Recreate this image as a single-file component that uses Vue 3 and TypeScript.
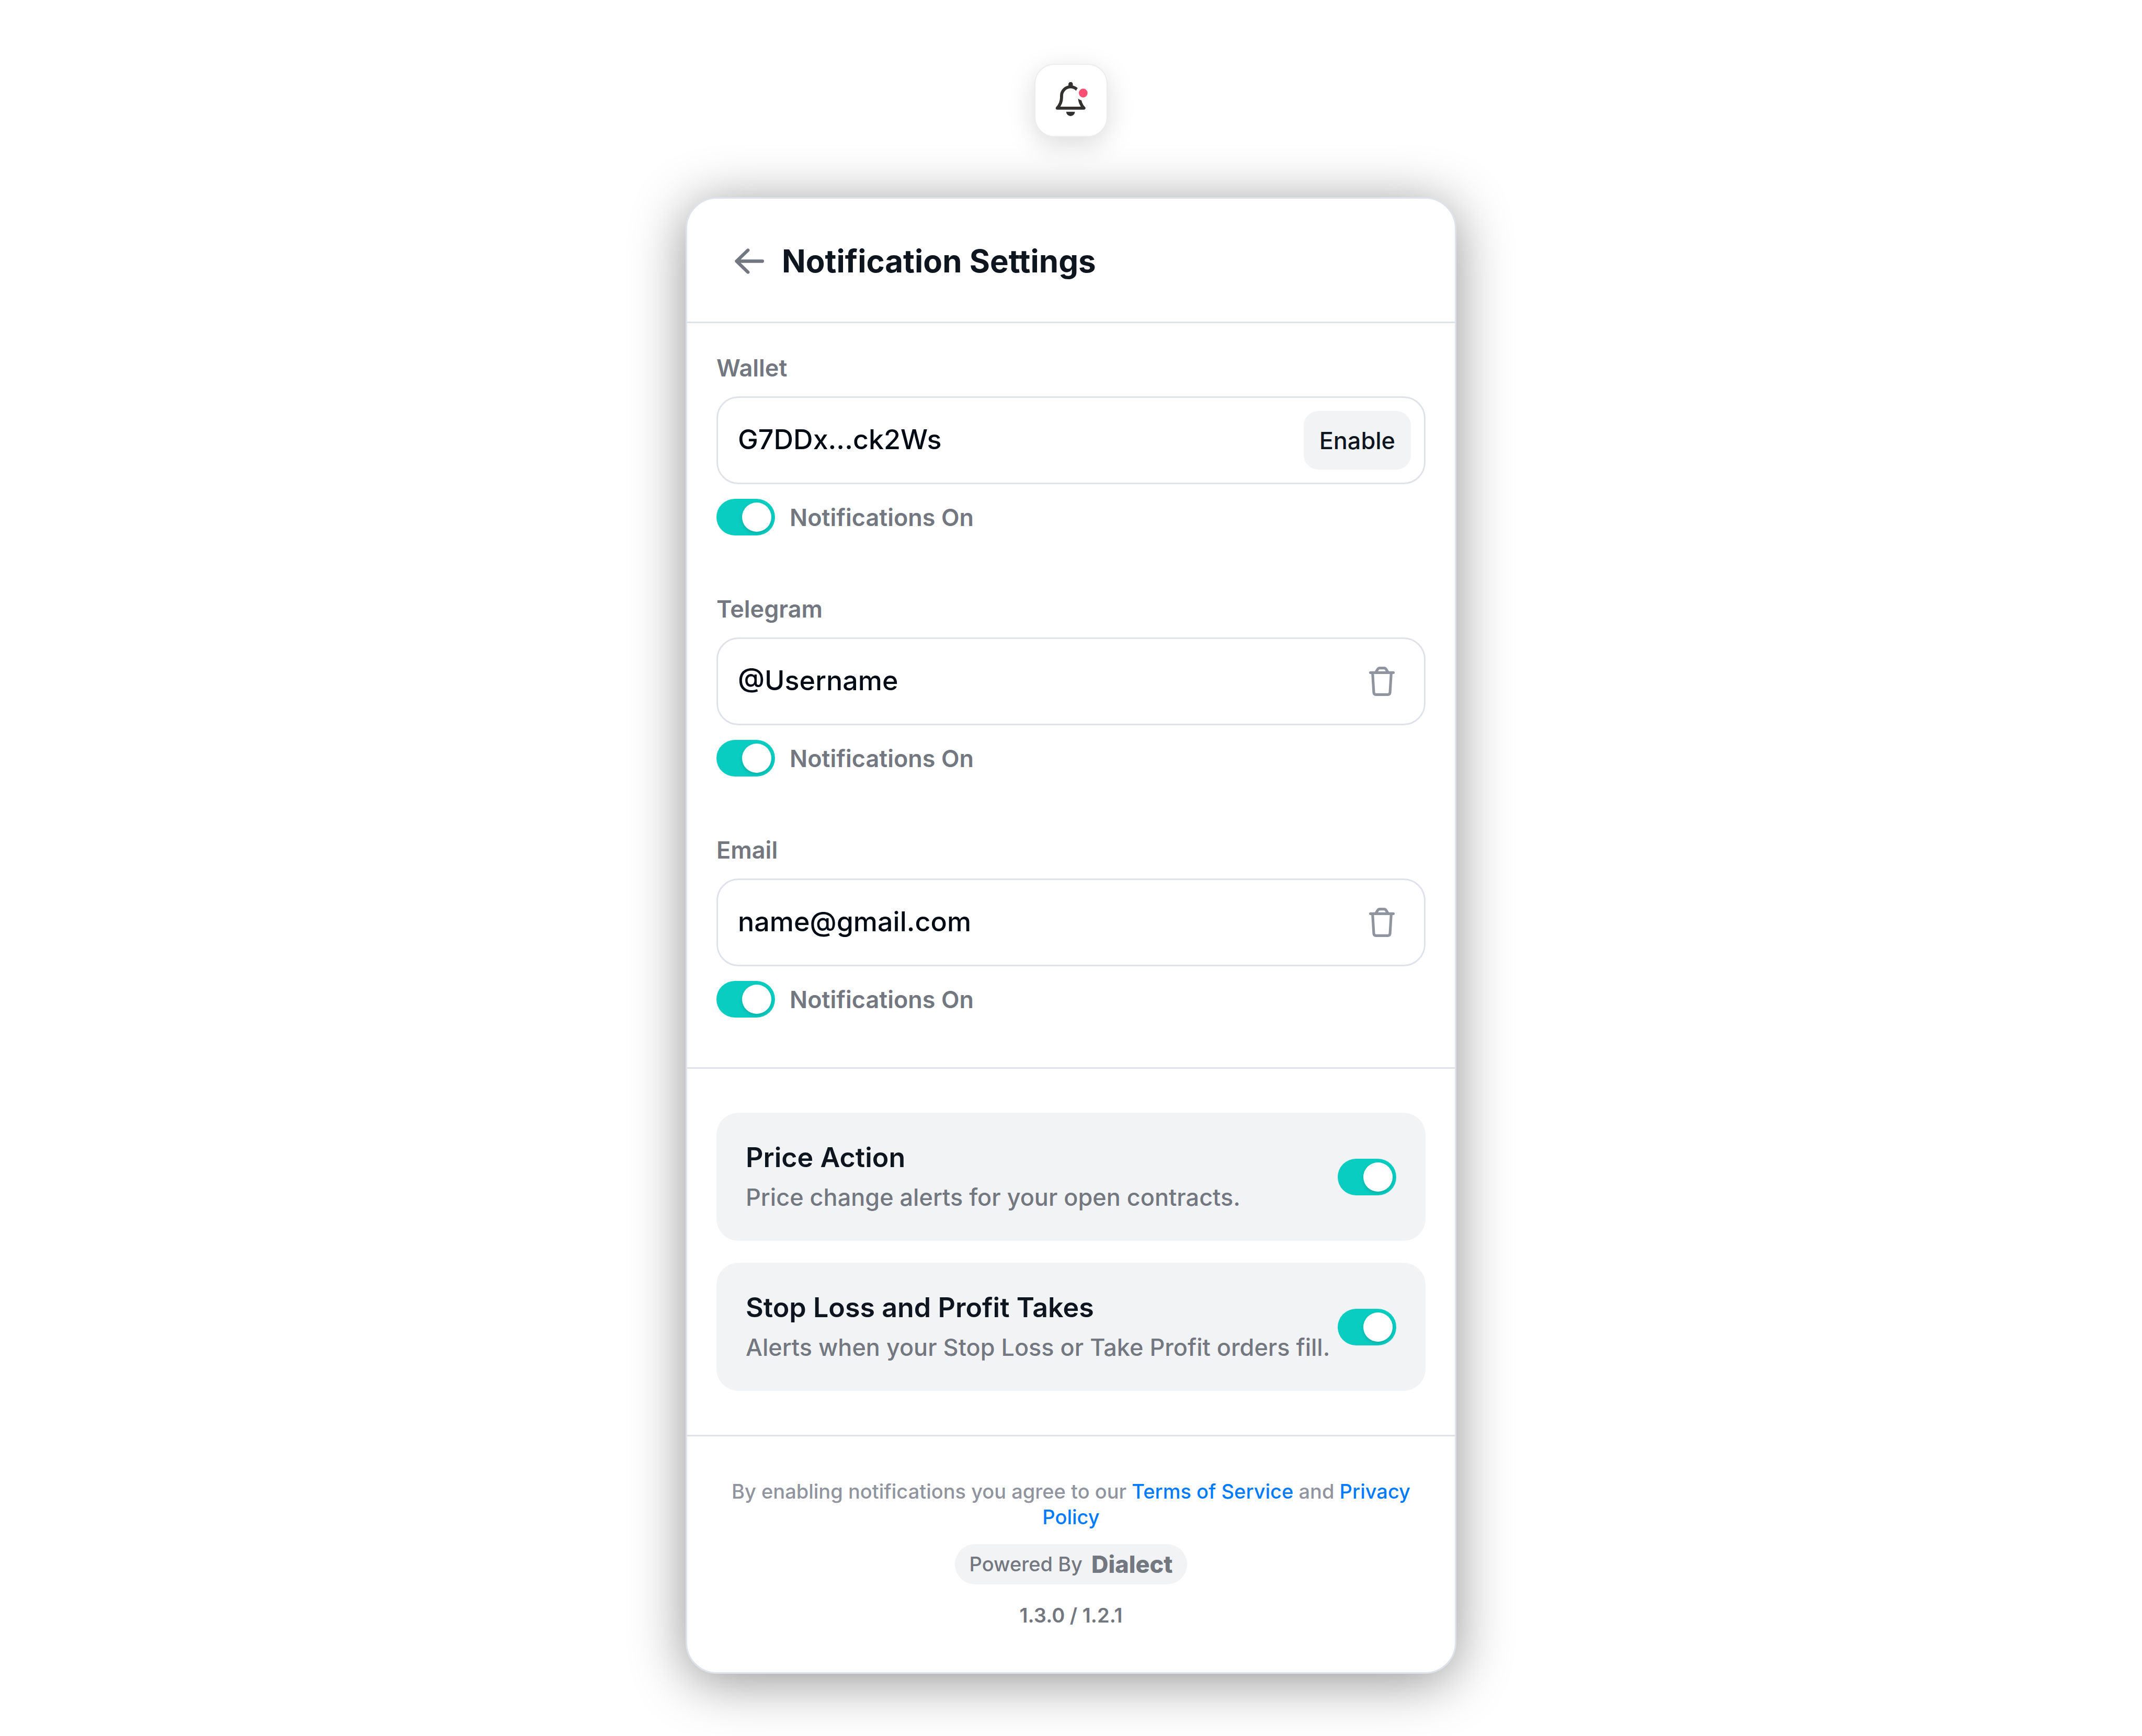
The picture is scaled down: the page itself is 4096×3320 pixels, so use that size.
<script setup lang="ts">
import { reactive, ref } from 'vue'

interface Channel {
  id: string
  label: string
  value: string
  removable: boolean
  on: boolean
}

interface Topic {
  id: string
  title: string
  description: string
  on: boolean
}

const channels = reactive<Channel[]>([
  { id: 'wallet', label: 'Wallet', value: 'G7DDx...ck2Ws', removable: false, on: true },
  { id: 'telegram', label: 'Telegram', value: '@Username', removable: true, on: true },
  { id: 'email', label: 'Email', value: 'name@gmail.com', removable: true, on: true },
])

const topics = reactive<Topic[]>([
  {
    id: 'price-action',
    title: 'Price Action',
    description: 'Price change alerts for your open contracts.',
    on: true,
  },
  {
    id: 'stop-loss',
    title: 'Stop Loss and Profit Takes',
    description: 'Alerts when your Stop Loss or Take Profit orders fill.',
    on: true,
  },
])

const hasUnread = ref(true)
</script>

<template>
  <main class="page">
    <button class="bell" type="button" aria-label="Notifications">
      <svg class="bell-icon" viewBox="300 285 300 300" aria-hidden="true">
        <mask id="bell-cut" maskUnits="userSpaceOnUse" x="300" y="280" width="300" height="310">
          <rect x="300" y="280" width="300" height="310" fill="#fff" />
          <circle v-if="hasUnread" cx="550" cy="375" r="61" fill="#000" />
        </mask>
        <g mask="url(#bell-cut)">
          <path
            d="M337 498.5C360 474 372.500 442 372.500 410V398a74 74 0 0 1 148 0V410C520.500 442 533 474 556 498.500Z"
            fill="none"
            stroke="#323130"
            stroke-width="25"
            stroke-linejoin="round"
          />
          <path d="M429 325V302a18 18 0 0 1 36 0V325Z" fill="#323130" />
          <path d="M411 528H482a35.500 35.500 0 0 1-71 0Z" fill="#323130" />
        </g>
        <circle v-if="hasUnread" cx="550" cy="375" r="36" fill="#ff5073" />
      </svg>
    </button>

    <section class="panel" aria-labelledby="panel-title">
      <header class="panel-header">
        <button class="back" type="button" aria-label="Back">
          <svg class="back-icon" viewBox="0 0 80 70" aria-hidden="true">
            <path
              d="M75.500 35H5M36 5L5 35L36 65"
              fill="none"
              stroke="#737780"
              stroke-width="9"
              stroke-linecap="round"
              stroke-linejoin="round"
            />
          </svg>
        </button>
        <h1 id="panel-title" class="panel-title">Notification Settings</h1>
      </header>

      <div class="channels">
        <div v-for="channel in channels" :key="channel.id" class="channel">
          <label class="channel-label" :for="channel.id">{{ channel.label }}</label>
          <div class="field">
            <input
              :id="channel.id"
              v-model="channel.value"
              class="field-input"
              type="text"
              :readonly="!channel.removable"
              spellcheck="false"
            />
            <button
              v-if="channel.removable"
              class="remove"
              type="button"
              :aria-label="`Remove ${channel.label}`"
            >
              <svg class="remove-icon" viewBox="0 0 70 80" aria-hidden="true">
                <path
                  d="M3.700 16.200H66.300M9.500 16.200L12.800 70.500Q13.200 76.200 19 76.200H51Q56.800 76.200 57.200 70.500L60.500 16.200M18 16L22.600 8.500Q25 3.700 29 3.700H41Q45 3.700 47.400 8.500L52 16"
                  fill="none"
                  stroke="#8f949e"
                  stroke-width="7.400"
                  stroke-linecap="round"
                  stroke-linejoin="round"
                />
              </svg>
            </button>
            <button v-else class="enable" type="button">Enable</button>
          </div>
          <label class="channel-state">
            <input v-model="channel.on" class="toggle" type="checkbox" />
            <span>Notifications {{ channel.on ? 'On' : 'Off' }}</span>
          </label>
        </div>
      </div>

      <div class="topics">
        <label v-for="topic in topics" :key="topic.id" class="topic">
          <span class="topic-text">
            <span class="topic-title">{{ topic.title }}</span>
            <span class="topic-description">{{ topic.description }}</span>
          </span>
          <input v-model="topic.on" class="toggle" type="checkbox" />
        </label>
      </div>

      <footer class="panel-footer">
        <p class="terms">
          By enabling notifications you agree to our
          <a class="link" href="#terms">Terms of Service</a> and
          <a class="link" href="#privacy">Privacy Policy</a>
        </p>
        <a class="powered" href="#dialect">
          <span>Powered By</span>
          <span class="brand">Dialect</span>
        </a>
        <p class="version">1.3.0 / 1.2.1</p>
      </footer>
    </section>
  </main>
</template>

<style>
body {
  background: #ffffff;
}
</style>

<style scoped>
.page {
  box-sizing: border-box;
  display: flex;
  flex-direction: column;
  align-items: center;
  gap: 115px;
  padding: 122px 28px 119px;
  font-family: Inter, 'Liberation Sans', sans-serif;
  font-size: 45px;
  color: #0f151e;
}

button,
input {
  box-sizing: border-box;
  margin: 0;
  padding: 0;
  border: 0;
  background: none;
  font: inherit;
  color: inherit;
}

button,
.toggle {
  cursor: pointer;
}

svg {
  display: block;
}

.bell {
  display: flex;
  align-items: center;
  justify-content: center;
  width: 140px;
  height: 140px;
  border: 2px solid #ececec;
  border-radius: 38px;
  background: #ffffff;
  background-clip: padding-box;
  box-shadow: 0 14px 52px rgba(0, 0, 0, 0.15);
}

.bell-icon {
  width: 70px;
  height: 70px;
}

.panel {
  box-sizing: border-box;
  width: 100%;
  max-width: 1474px;
  border: 3px solid #dfe2e8;
  border-radius: 60px;
  background: #ffffff;
  box-shadow: 0 14px 105px rgba(0, 0, 0, 0.43);
}

.panel-header {
  display: flex;
  align-items: center;
  gap: 34px;
  padding: 84px 91px 80px;
  border-bottom: 3px solid #dfe2e8;
}

.back-icon {
  width: 56px;
  height: 49px;
}

.panel-title {
  margin: 0;
  font-size: 60px;
  line-height: 71px;
  font-weight: 700;
}

.channels {
  display: flex;
  flex-direction: column;
  gap: 109px;
  padding: 54px 56px 95px;
  border-bottom: 3px solid #dfe2e8;
}

.channel {
  display: flex;
  flex-direction: column;
}

.channel-label {
  margin-bottom: 22px;
  line-height: 64px;
  font-weight: 600;
  color: #737780;
}

.field {
  box-sizing: border-box;
  display: flex;
  align-items: center;
  height: 168px;
  margin-bottom: 28px;
  padding: 0 25px 0 38px;
  border: 3px solid #dfe2e8;
  border-radius: 42px;
}

.field-input {
  flex: 1;
  min-width: 0;
  height: 112px;
  padding-bottom: 3px;
  outline: none;
  font-size: 52px;
  font-weight: 500;
  color: #020a14;
}

.enable {
  height: 112px;
  padding: 0 30px;
  border-radius: 28px;
  background: #f1f3f5;
  font-weight: 500;
}

.remove {
  height: 112px;
  padding: 0 31px;
}

.remove-icon {
  width: 49px;
  height: 56px;
}

.channel-state {
  display: flex;
  align-items: center;
  align-self: flex-start;
  gap: 28px;
  font-weight: 600;
  color: #737780;
}

.toggle {
  flex: none;
  display: flex;
  align-items: center;
  width: 112px;
  height: 70px;
  padding: 0 7px;
  border-radius: 35px;
  background: #c4c8cf;
  appearance: none;
}

.toggle::before {
  content: '';
  width: 56px;
  height: 56px;
  border-radius: 50%;
  background: #ffffff;
  box-shadow: 0 3px 7px rgba(0, 0, 0, 0.15);
}

.toggle:checked {
  justify-content: flex-end;
  background: #0acdc2;
}

.topics {
  display: flex;
  flex-direction: column;
  gap: 42px;
  padding: 84px 56px;
  border-bottom: 3px solid #dfe2e8;
}

.topic {
  display: flex;
  align-items: center;
  justify-content: space-between;
  padding: 45px 56px;
  border-radius: 42px;
  background: #f1f3f5;
}

.topic-text {
  display: flex;
  flex-direction: column;
  padding-top: 3px;
  line-height: 76px;
  white-space: nowrap;
}

.topic-title {
  font-size: 52px;
  font-weight: 600;
}

.topic-description {
  font-weight: 500;
  color: #737780;
}

.panel-footer {
  display: flex;
  flex-direction: column;
  align-items: center;
  padding: 81px 56px 84px;
  font-size: 38px;
  line-height: 49px;
  font-weight: 500;
}

.terms {
  margin: 0 0 27px;
  text-align: center;
  color: #8f949e;
}

.link {
  color: #007bff;
  text-decoration: none;
}

.powered {
  display: flex;
  align-items: center;
  gap: 17px;
  height: 77px;
  padding: 0 28px;
  border-radius: 39px;
  background: #f1f3f5;
  color: #737780;
  text-decoration: none;
}

.brand {
  font-size: 45px;
  font-weight: 800;
}

.version {
  margin: 35px 0 0;
  font-weight: 600;
  color: #737780;
}
</style>
